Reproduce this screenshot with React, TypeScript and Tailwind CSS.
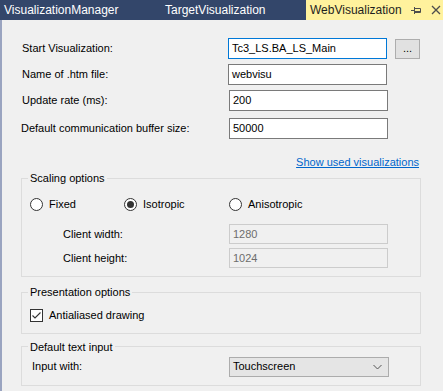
import React from 'react';

const font = { fontFamily: '"Liberation Sans", Arial, sans-serif' };

function TextBox({ value, focused, disabled, tall = true }: { value: string; focused?: boolean; disabled?: boolean; tall?: boolean }) {
  const border = focused ? 'border-[#0078d7]' : disabled ? 'border-[#cccccc]' : 'border-[#7a7a7a]';
  return (
    <div
      className={`${tall ? 'h-[21px]' : 'h-[20px]'} w-[159px] border ${border} ${disabled ? 'bg-[#f0f0f0] text-[#6d6d6d]' : 'bg-white text-black'} flex items-center pl-[3px]`}
    >
      {value}
    </div>
  );
}

function Radio({ checked, label, className = '' }: { checked?: boolean; label: string; className?: string }) {
  return (
    <div className={`flex items-center gap-[6px] ${className}`}>
      <span className="w-[13px] h-[13px] rounded-full border border-[#333333] bg-white flex items-center justify-center shrink-0">
        {checked && <span className="w-[7px] h-[7px] rounded-full bg-[#333333]" />}
      </span>
      <span>{label}</span>
    </div>
  );
}

function Group({ title, className = '', children }: { title: string; className?: string; children: React.ReactNode }) {
  return (
    <fieldset className={`ml-[19px] w-[400px] border border-[#dcdcdc] ${className}`}>
      <legend className="ml-[6px] px-[2px] leading-[14px]">{title}</legend>
      {children}
    </fieldset>
  );
}

export default function App() {
  return (
    <div className="w-[443px] h-[391px] bg-[#f0f0f0] overflow-hidden flex flex-col text-[11px] text-black" style={font}>
      {/* tab strip */}
      <div className="h-[20px] bg-[#33466a] flex text-[12px] shrink-0">
        <div className="w-[161px] pl-[4px] flex items-center text-white">VisualizationManager</div>
        <div className="w-[145px] pl-[4px] flex items-center text-white">TargetVisualization</div>
        <div className="flex-1 bg-[#fff29d] pl-[4px] flex items-center text-[#1e1e1e]">
          <span>WebVisualization</span>
          <svg width="11" height="9" viewBox="0 0 11 9" className="ml-[9px]">
            <path d="M0 4.5H3.5M3.5 1V8M3.5 2.5H9.5V6.5H3.5M3.5 5.5H9.5" stroke="#4d4d4d" strokeWidth="1" fill="none" />
          </svg>
          <svg width="10" height="10" viewBox="0 0 10 10" className="ml-[9px]">
            <path d="M1 1L9 9M9 1L1 9" stroke="#4d4d4d" strokeWidth="1.3" />
          </svg>
        </div>
      </div>

      {/* body */}
      <div className="flex-1 border-l-2 border-[#9aa4c0] flex flex-col">
        <div className="mt-[18px] flex items-center h-[21px]">
          <span className="pl-[20px] w-[226px]">Start Visualization:</span>
          <TextBox value="Tc3_LS.BA_LS_Main" focused />
          <div className="ml-[8px] w-[25px] h-[20px] border border-[#adadad] bg-[#e1e1e1] flex items-center justify-center">...</div>
        </div>
        <div className="mt-[5px] flex items-center h-[21px]">
          <span className="pl-[20px] w-[226px]">Name of .htm file:</span>
          <TextBox value="webvisu" />
        </div>
        <div className="mt-[5px] flex items-center h-[21px]">
          <span className="pl-[20px] w-[227px]">Update rate (ms):</span>
          <TextBox value="200" />
        </div>
        <div className="mt-[7px] flex items-center h-[21px]">
          <span className="pl-[19px] w-[227px]">Default communication buffer size:</span>
          <TextBox value="50000" />
        </div>

        <div className="mt-[16px] h-[14px] flex justify-end pr-[24px]">
          <span className="text-[#0066cc] underline leading-[14px]">Show used visualizations</span>
        </div>

        <Group title="Scaling options" className="mt-[2px] pb-[8px]">
          <div className="mt-[12px] h-[14px] flex items-center pl-[8px]">
            <Radio label="Fixed" className="w-[94px]" />
            <Radio label="Isotropic" checked className="w-[105px]" />
            <Radio label="Anisotropic" />
          </div>
          <div className="mt-[13px] flex items-center">
            <span className="pl-[41px] w-[207px]">Client width:</span>
            <TextBox value="1280" disabled tall={false} />
          </div>
          <div className="mt-[4px] flex items-center">
            <span className="pl-[41px] w-[207px]">Client height:</span>
            <TextBox value="1024" disabled tall={false} />
          </div>
        </Group>

        <Group title="Presentation options" className="mt-[8px] pb-[9px]">
          <div className="mt-[8px] flex items-center pl-[8px] gap-[6px]">
            <span className="w-[13px] h-[13px] border border-[#333333] bg-white flex items-center justify-center">
              <svg width="11" height="11" viewBox="0 0 11 11">
                <path d="M1.5 5.5L4 8L9.5 2.5" stroke="#333333" strokeWidth="1.1" fill="none" />
              </svg>
            </span>
            <span>Antialiased drawing</span>
          </div>
        </Group>

        <Group title="Default text input" className="mt-[6px] pb-[8px]">
          <div className="mt-[3px] flex items-center">
            <span className="pl-[10px] w-[207px]">Input with:</span>
            <div className="w-[160px] h-[20px] border border-[#acacac] bg-[#e5e5e5] flex items-center pl-[3px] pr-[6px]">
              <span className="flex-1">Touchscreen</span>
              <svg width="9" height="6" viewBox="0 0 9 6">
                <path d="M0.5 1L4.5 5L8.5 1" stroke="#555555" strokeWidth="1" fill="none" />
              </svg>
            </div>
          </div>
        </Group>
      </div>
    </div>
  );
}
